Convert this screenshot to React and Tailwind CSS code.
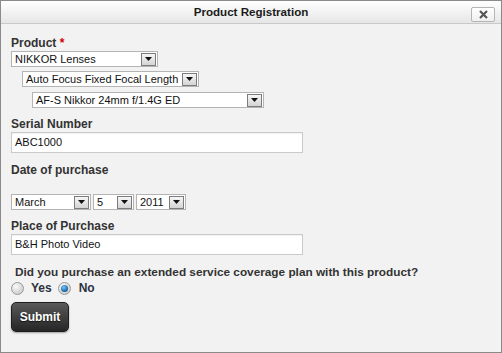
import React from "react";

const FONT = "font-['Liberation_Sans',Arial,sans-serif]";

function FakeSelect({ value, className = "" }) {
  return (
    <div className={`flex h-[16px] items-center border border-[#b4b4b4] bg-white ${className}`}>
      <span className="flex-1 truncate pl-[3px] text-[11px] leading-none text-[#111]">{value}</span>
      <span className="mr-[1px] flex h-[13px] w-[15px] items-center justify-center border border-[#7c7c7c] bg-linear-to-b from-[#f6f6f6] to-[#d4d4d4]">
        <svg width="7" height="4" viewBox="0 0 7 4">
          <path d="M0 0h7L3.5 4z" fill="#111" />
        </svg>
      </span>
    </div>
  );
}

function TextBox({ value }) {
  return (
    <div className="mt-[1px] flex h-[21px] w-[292px] items-center border border-[#cacaca] bg-white pl-[3px] text-[11px] text-[#111] shadow-[inset_0_1px_1px_rgba(0,0,0,0.06)]">
      {value}
    </div>
  );
}

function Label({ children, className = "", size = "text-[12px]" }) {
  return <div className={`h-[14px] font-bold leading-[14px] text-[#333] ${size} ${className}`}>{children}</div>;
}

function Radio({ checked }) {
  return (
    <span className="flex h-[13px] w-[13px] items-center justify-center rounded-full border border-[#9a9a9a] bg-[radial-gradient(circle_at_35%_30%,#fafafa,#cfcfcf_75%)]">
      {checked && (
        <span className="h-[7px] w-[7px] rounded-full bg-[radial-gradient(circle_at_40%_35%,#7fc4f2,#1c6fb5_60%,#0e4a82)]" />
      )}
    </span>
  );
}

export default function App() {
  return (
    <div className={`${FONT} flex h-[353px] w-[502px] flex-col border border-[#8a8a8a] bg-[#f2f2f2]`}>
      {/* Title bar */}
      <div className="relative flex h-[23px] shrink-0 items-center justify-center border-b border-[#c9c9c9] bg-linear-to-b from-[#ffffff] to-[#e6e6e6]">
        <span className="text-[11.6px] font-bold text-[#1b1b1b]">Product Registration</span>
        <button className="absolute right-[6px] top-[6px] flex h-[15px] w-[24px] items-center justify-center rounded-[2px] border border-[#b4b4b4] bg-linear-to-b from-[#ffffff] to-[#efefef]">
          <svg width="9" height="9" viewBox="0 0 9 9">
            <path d="M1 1l7 7M8 1L1 8" stroke="#555" strokeWidth="2.2" />
          </svg>
        </button>
      </div>

      {/* Form */}
      <div className="flex flex-col pl-[10px]">
        <Label className="mt-[12px]">
          Product <span className="text-[#d40000]">*</span>
        </Label>
        <FakeSelect value="NIKKOR Lenses" className="mt-[1px] w-[147px]" />
        <FakeSelect value="Auto Focus Fixed Focal Length" className="ml-[11px] mt-[4px] w-[177px]" />
        <FakeSelect value="AF-S Nikkor 24mm f/1.4G ED" className="ml-[21px] mt-[5px] w-[232px]" />

        <Label className="mt-[9px]">Serial Number</Label>
        <TextBox value="ABC1000" />

        <Label className="mt-[10px]">Date of purchase</Label>
        <div className="mt-[17px] flex gap-[2px]">
          <FakeSelect value="March" className="w-[80px]" />
          <FakeSelect value="5" className="w-[41px]" />
          <FakeSelect value="2011" className="w-[50px]" />
        </div>

        <Label className="mt-[9px]">Place of Purchase</Label>
        <TextBox value="B&H Photo Video" />

        <Label className="mt-[10px] pl-[4px]" size="text-[11.8px]">
          Did you purchase an extended service coverage plan with this product?
        </Label>
        <div className="mt-[2px] flex h-[14px] items-center text-[12px] font-bold text-[#2b3340]">
          <Radio />
          <span className="ml-[7px]">Yes</span>
          <span className="ml-[6px]">
            <Radio checked />
          </span>
          <span className="ml-[8px]">No</span>
        </div>

        <button className="mt-[7px] flex h-[30px] w-[58px] items-center justify-center rounded-[5px] border border-[#1e1e1e] bg-linear-to-b from-[#5a5a5a] to-[#262626] text-[12px] font-bold text-white shadow-[0_1px_2px_rgba(0,0,0,0.35)] [text-shadow:0_1px_1px_rgba(0,0,0,0.7)]">
          Submit
        </button>
      </div>
    </div>
  );
}
